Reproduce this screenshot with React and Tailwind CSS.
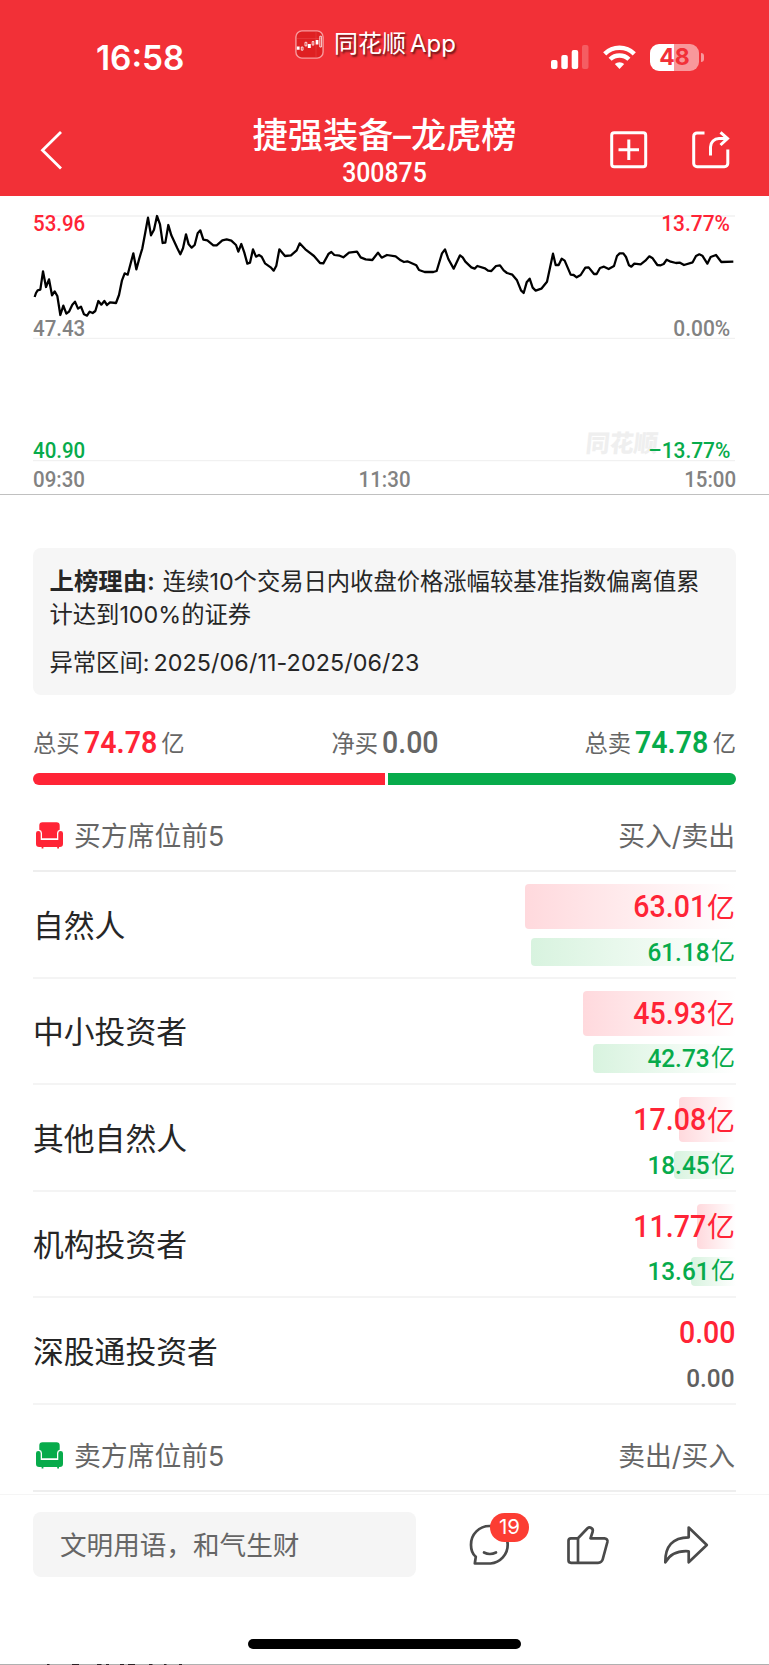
import React from "react";

const SANS = "font-['Inter','Noto_Sans_CJK_SC',sans-serif]";
const NUM = "font-['Roboto','Noto_Sans_CJK_SC',sans-serif]";

const rows = [
  { name: "自然人", a: "63.01", b: "61.18", aw: 210.7, bw: 204.7 },
  { name: "中小投资者", a: "45.93", b: "42.73", aw: 153.3, bw: 143 },
  { name: "其他自然人", a: "17.08", b: "18.45", aw: 57, bw: 62 },
  { name: "机构投资者", a: "11.77", b: "13.61", aw: 39, bw: 45 },
  { name: "深股通投资者", a: "0.00", b: "0.00", aw: 0, bw: 0 },
];

const PRICE =
  "M104 306L108 294L113 286L121 284L129 229L138 276L147 253L156 301L164 289L172 303L181 360L190 332L199 356L207 350L217 329L225 320L234 341L243 335L252 358L261 362L269 350L278 354L286 348L295 318L304 329L313 318L321 330L330 322L348 324L357 300L366 256L374 235L383 239L400 175L409 223L418 190L427 160L436 112L444 68L453 121L462 104L471 63L480 88L488 144L496 143L505 90L514 121L532 160L541 178L549 160L558 118L566 148L575 158L584 150L593 115L601 106L610 134L622 136L640 151L650 151L667 136L680 133L694 137L708 150L715 170L724 147L733 173L742 206L750 203L759 163L768 185L777 180L785 185L795 205L812 217L821 227L829 212L838 163L855 183L873 181L890 166L899 145L916 163L942 183L960 204L970 205L986 176L994 171L1003 180L1019 182L1030 187L1047 173L1071 170L1082 187L1097 193L1117 195L1134 173L1145 188L1161 180L1187 184L1202 196L1212 201L1222 199L1249 211L1257 225L1274 231L1300 231L1310 228L1326 175L1335 163L1345 192L1361 221L1380 181L1388 187L1396 200L1414 217L1424 221L1432 213L1455 220L1464 227L1474 228L1488 213L1500 211L1511 226L1521 234L1537 239L1551 256L1563 286L1571 294L1580 262L1589 251L1598 278L1607 287L1624 281L1641 260L1650 218L1659 176L1667 210L1676 210L1685 191L1694 197L1712 239L1721 240L1730 247L1742 240L1756 218L1766 217L1782 237L1790 237L1800 219L1812 215L1826 222L1842 213L1851 183L1859 175L1870 175L1878 186L1887 211L1894 215L1903 206L1922 208L1936 197L1948 184L1958 190L1972 210L1982 211L1991 207L2000 194L2012 200L2028 204L2040 203L2052 210L2078 202L2088 183L2098 178L2107 182L2122 206L2132 186L2148 180L2164 201L2200 200";

function Sofa({ className }) {
  return (
    <svg viewBox="0 0 27 27" className={"h-[27px] w-[27px] " + className} fill="currentColor">
      <path d="M6.500.3h14a3.200 3.200 0 0 1 3.200 3.200v4.300a3.500 3.500 0 0 0-2.700 3.200v5.300H6V11a3.500 3.500 0 0 0-2.700-3.200V3.500A3.200 3.200 0 0 1 6.500.3z" />
      <path d="M2.400 9a2.300 2.300 0 0 1 2.300 2.300v6.700h17.600v-6.700a2.350 2.350 0 0 1 4.700 0v10.400a3.200 3.200 0 0 1-3.200 3.200h-.8v1.600h-1.800v-1.600H7.400v1.600H5.600v-1.600H3.200A3.200 3.200 0 0 1 0 21.700V11.300A2.300 2.300 0 0 1 2.400 9z" />
    </svg>
  );
}

function StatusBar() {
  return (
    <div className="flex h-[100px] items-start">
      <div className="w-[295px] pt-[36.500px] pl-[96px] text-[33.400px] leading-[42px] font-semibold">16:58</div>
      <div className="flex w-[256px] items-center pt-[29px]">
        <svg viewBox="0 0 29 29" className="h-[29px] w-[29px]" fill="none">
          <rect x=".9" y=".9" width="27.2" height="27.2" rx="6" fill="#df2022" stroke="#f89a9d" strokeWidth="1.4" />
          <path d="M2 8.5h25M21 2v25" stroke="#e84044" strokeWidth=".6" />
          <path d="M1.800 16.500h2.800v3.300H1.800zM12.800 14h3v4h-3zM20.700 10h2.700v4.500h-2.700z" fill="#fff" />
          <path d="M6.300 17h1.700v3.200H6.300zM10 12.300h1.800v3.600H10zM17.200 11.500h1.600v3.600h-1.600zM24.800 6.200h1.600v10.800h-1.600z" stroke="#fff" strokeWidth=".8" />
        </svg>
        <span className="ml-[10px] text-[24px] leading-[30px] whitespace-nowrap [text-shadow:1.5px_1.5px_2px_rgba(0,0,0,0.6)]">
          同花顺<span className="ml-[4px]">App</span>
        </span>
      </div>
      <svg viewBox="0 0 38 24" className="mt-[45px] h-[24px] w-[38px]" fill="#fff">
        <rect x="0" y="15" width="6.5" height="9" rx="2" />
        <rect x="10.3" y="10" width="6.5" height="14" rx="2" />
        <rect x="20.7" y="5" width="6.5" height="19" rx="2" />
        <rect x="31" y="0" width="6.5" height="24" rx="2" opacity=".22" />
      </svg>
      <svg viewBox="0 0 33 24" className="mt-[45px] ml-[14px] h-[24px] w-[33px]" fill="none" stroke="#fff" strokeWidth="4.4">
        <path d="M1.700 8.900a21 21 0 0 1 29.600 0" />
        <path d="M7.100 14.300a13.400 13.400 0 0 1 18.800 0" />
        <path d="M16.500 24l-4.700-4.900a6.800 6.800 0 0 1 9.400 0z" fill="#fff" stroke="none" />
      </svg>
      <div className="mt-[43.500px] ml-[14px] flex items-center">
        <div className="flex h-[27.500px] w-[49px] items-center justify-center rounded-[9px] bg-[linear-gradient(90deg,#fff_49%,#f8989b_49%)] text-[23px] leading-none font-bold text-[#f23037]">
          48
        </div>
        <div className="ml-[1.500px] h-[9px] w-[3px] rounded-r-full bg-[#f8989b]" />
      </div>
    </div>
  );
}

function Header() {
  return (
    <header className="h-[196px] bg-[#f23037] text-white">
      <StatusBar />
      <div className="flex h-[96px] items-start pt-[12px]">
        <svg viewBox="0 0 22 40" className="mt-[18px] ml-[40px] h-[40px] w-[22px]" fill="none" stroke="#fff" strokeWidth="2.8">
          <path d="M21 2L2.500 20.300L21 38.500" />
        </svg>
        <div className="ml-[172px] w-[301px] text-center">
          <div className="text-[35.200px] leading-[46px] font-medium whitespace-nowrap">捷强装备–龙虎榜</div>
          <div className={NUM + " scale-x-[0.92] text-[27px] leading-[30px] font-medium"}>300875</div>
        </div>
        <svg viewBox="0 0 38 38" className="mt-[19px] ml-[75px] h-[38px] w-[38px]" fill="none" stroke="#fff" strokeWidth="3">
          <rect x="1.7" y="1.7" width="34" height="34" rx="2.5" />
          <path d="M18.800 8.500v20.500M8.500 18.800h20.500" />
        </svg>
        <svg viewBox="0 0 38 38" className="mt-[19px] ml-[44px] h-[38px] w-[38px]" fill="none" stroke="#fff" strokeWidth="3">
          <path d="M12.500 1.900H5A3.300 3.300 0 0 0 1.700 5.200V32.400A3.300 3.300 0 0 0 5 35.700H32.500A3.300 3.300 0 0 0 35.800 32.400V18.500" />
          <path d="M18.500 24.500V16A8.500 8.500 0 0 1 27 7.500H35.500M28.500 1.300L35.500 7.500L28.500 14" />
        </svg>
      </div>
    </header>
  );
}

function Chart() {
  return (
    <section className={NUM + " relative h-[299px] border-b border-[#c0c0c0] px-[33px] text-[22.500px] leading-[26px] font-medium text-[#828282]"}>
      <svg viewBox="0 3 2307 894" className="absolute top-0 left-0 h-[298px] w-[769px]" fill="none">
        <path d="M99 63H2205M99 430H2205M99 797H2205" stroke="#f1f1f1" strokeWidth="4" />
        <path d={PRICE} stroke="#000" strokeWidth="6.8" strokeLinejoin="round" />
      </svg>
      <div className="relative flex flex-col">
        <div className="flex justify-between pt-[13.500px] pr-[6px] text-[#ff2436]">
          <span className="origin-left scale-x-[0.910]">53.96</span>
          <span className="origin-right scale-x-[0.930]">13.77%</span>
        </div>
        <div className="flex justify-between pt-[79.500px] pr-[6px]">
          <span className="origin-left scale-x-[0.910]">47.43</span>
          <span className="origin-right scale-x-[0.930]">0.00%</span>
        </div>
        <div className="flex items-start pt-[96px] pr-[6px] text-[#07ab4b]">
          <span className="origin-left scale-x-[0.910]">40.90</span>
          <span className="mt-[-8px] -mr-[16px] ml-auto -skew-x-6 font-['Noto_Sans_CJK_SC'] text-[24px] font-black text-[#efefef]">同花顺</span>
          <span className="origin-right scale-x-[0.930]">–13.77%</span>
        </div>
        <div className="flex justify-between pt-[3px]">
          <span className="origin-left scale-x-[0.910]">09:30</span>
          <span className="scale-x-[0.910]">11:30</span>
          <span className="origin-right scale-x-[0.910]">15:00</span>
        </div>
      </div>
    </section>
  );
}

function Total({ label, value, unit, color }) {
  return (
    <div className="flex items-center whitespace-nowrap">
      <span className="mt-[3px] text-[23.300px]">{label}</span>
      <span className={NUM + " -mr-[6px] ml-[4px] origin-left scale-x-[0.920] text-[31px] " + color}>{value}</span>
      {unit && <span className="mt-[3px] ml-[4px] text-[23.300px]">{unit}</span>}
    </div>
  );
}

function SectionHead({ icon, title, right, className }) {
  return (
    <div className={"flex items-center border-b-2 border-[#eeeeee] text-[26.800px] text-[#666666] " + className}>
      <Sofa className={"-mt-[2px] ml-[3px] " + icon} />
      <span className="ml-[11px]">{title}</span>
      <span className="ml-auto pr-px">{right}</span>
    </div>
  );
}

function Row({ r }) {
  const zero = r.aw === 0;
  return (
    <div className="flex h-[106.500px] items-center border-b-2 border-[#f4f4f4]">
      <span className="flex-1 pt-[3px] text-[30.800px] text-[#262626]">{r.name}</span>
      <div className="flex w-[211px] flex-col gap-[8.500px] self-start pt-[12px]">
        <div className="relative flex h-[45px] items-center justify-end pr-px text-[#ff2436]">
          <div className="absolute inset-y-0 right-0 rounded-l-[4px] bg-linear-to-r from-[#ffd9dd] to-white" style={{ width: r.aw }} />
          <span className={NUM + " relative origin-right scale-x-[0.920] pt-[2px] text-[31px] font-medium"}>{r.a}</span>
          {!zero && <span className="relative ml-[1px] pt-[2px] text-[28px]">亿</span>}
        </div>
        <div className={"relative flex h-[28.500px] items-center justify-end pr-px " + (zero ? "text-[#5f5f5f]" : "text-[#07ab4b]")}>
          <div className="absolute inset-y-0 right-0 rounded-l-[4px] bg-linear-to-r from-[#d8f3df] to-white" style={{ width: r.bw }} />
          <span className={NUM + " relative origin-right scale-x-[0.920] text-[26.500px] font-medium"}>{r.b}</span>
          {!zero && <span className="relative ml-[1px] text-[24px]">亿</span>}
        </div>
      </div>
    </div>
  );
}

function Footer() {
  return (
    <footer className="h-[171px] border-t border-[#f5f5f5]">
      <div className="flex pt-[17px] pl-[33px]">
        <div className="flex h-[65px] w-[383px] items-center rounded-[8px] bg-[#f5f5f5] pt-[2px] pl-[27px] text-[26.600px] text-[#666666]">
          文明用语，和气生财
        </div>
        <div className="relative ml-[53px] pt-[12px]">
          <svg viewBox="0 0 42 42" className="h-[42px] w-[42px]" fill="none" stroke="#4a4a4a" strokeWidth="2.7" strokeLinecap="round" strokeLinejoin="round">
            <path d="M21 2A18.500 18.500 0 0 0 2 21C2 26 4 30.500 6.800 32.800L5.800 39.500H21.500A18.800 18.800 0 0 0 21 2Z" />
            <path d="M15 28.500Q20.800 31.500 27 28.500" />
          </svg>
          <div className="absolute top-px left-[21px] flex h-[29px] w-[39px] items-center justify-center rounded-full bg-[#fc3d33] text-[20.500px] leading-none text-white">19</div>
        </div>
        <svg viewBox="0 0 44 42" className="mt-[12px] ml-[55px] h-[42px] w-[44px]" fill="none" stroke="#4a4a4a" strokeWidth="2.7" strokeLinejoin="round">
          <path d="M5 14.300H12L21.500 4.300A3.200 3.200 0 0 1 26.700 7.500L24.500 14.300H38.500A3 3 0 0 1 41.400 18L36.800 35A5 5 0 0 1 32 38.800H5A2.500 2.500 0 0 1 2.500 36.300V16.800A2.500 2.500 0 0 1 5 14.300ZM12 14.300V38.800" />
        </svg>
        <svg viewBox="0 0 46 42" className="mt-[12px] ml-[53px] h-[42px] w-[46px]" fill="none" stroke="#4a4a4a" strokeWidth="2.7" strokeLinejoin="round">
          <path d="M25.700 3.500L43.800 21L25.700 38.300V27.300C14.500 26.500 7 30 2.300 38.300C2 22.500 9.500 13.500 25.700 13.300Z" />
        </svg>
      </div>
      <div className="mx-auto mt-[62px] h-[10px] w-[273.500px] rounded-full bg-black" />
      <svg viewBox="0 0 769 1" className="mt-[15px] block h-px w-[769px]">
        <path d="M0 .5H769" stroke="#b0b0b0" />
        <path d="M47 .5h2.500M72 .5h7M97 .5h4.500M106 .5h3M120 .5h4M128 .5h7M149 .5h3.500M164 .5h2.500M179 .5h3" stroke="#2b2226" />
      </svg>
    </footer>
  );
}

export default function App() {
  return (
    <div className={SANS + " h-[1665px] w-[769px] overflow-hidden bg-white"} lang="zh-CN">
      <Header />
      <Chart />
      <main className="h-[999px] px-[33px] pt-[53px]">
        <section className="h-[147px] rounded-[8px] bg-[#f6f6f6] pt-[17px] pl-[16.500px] text-[23.300px] leading-[33px] text-[#262626]">
          <p className="w-[660px]">
            <b className="mr-[8px] inline-block text-[24.400px] leading-[33px] font-semibold">上榜理由:</b>连续10个交易日内收盘价格涨幅较基准指数偏离值累计达到100%的证券
          </p>
          <p className="mt-[15px]">
            异常区间:<span className="ml-[4px] tracking-[0.1px]">2025/06/11-2025/06/23</span>
          </p>
        </section>
        <section className="mt-[28px] flex h-[40px] items-center justify-between text-[#666666]">
          <Total label="总买" value="74.78" unit="亿" color="font-semibold text-[#ff2436]" />
          <Total label="净买" value="0.00" color="font-medium text-[#666666]" />
          <Total label="总卖" value="74.78" unit="亿" color="font-semibold text-[#07ab4b]" />
        </section>
        <div className="mt-[10px] flex h-[12px] gap-[3px]">
          <div className="w-[352px] rounded-l-full bg-[#ff2436]" />
          <div className="flex-1 rounded-r-full bg-[#07ab4b]" />
        </div>
        <SectionHead className="h-[87px] pt-[18px]" icon="text-[#ff2436]" title="买方席位前5" right="买入/卖出" />
        {rows.map((r) => (
          <Row key={r.name} r={r} />
        ))}
        <SectionHead className="h-[87px] pt-[19px]" icon="text-[#07ab4b]" title="卖方席位前5" right="卖出/买入" />
      </main>
      <Footer />
    </div>
  );
}
